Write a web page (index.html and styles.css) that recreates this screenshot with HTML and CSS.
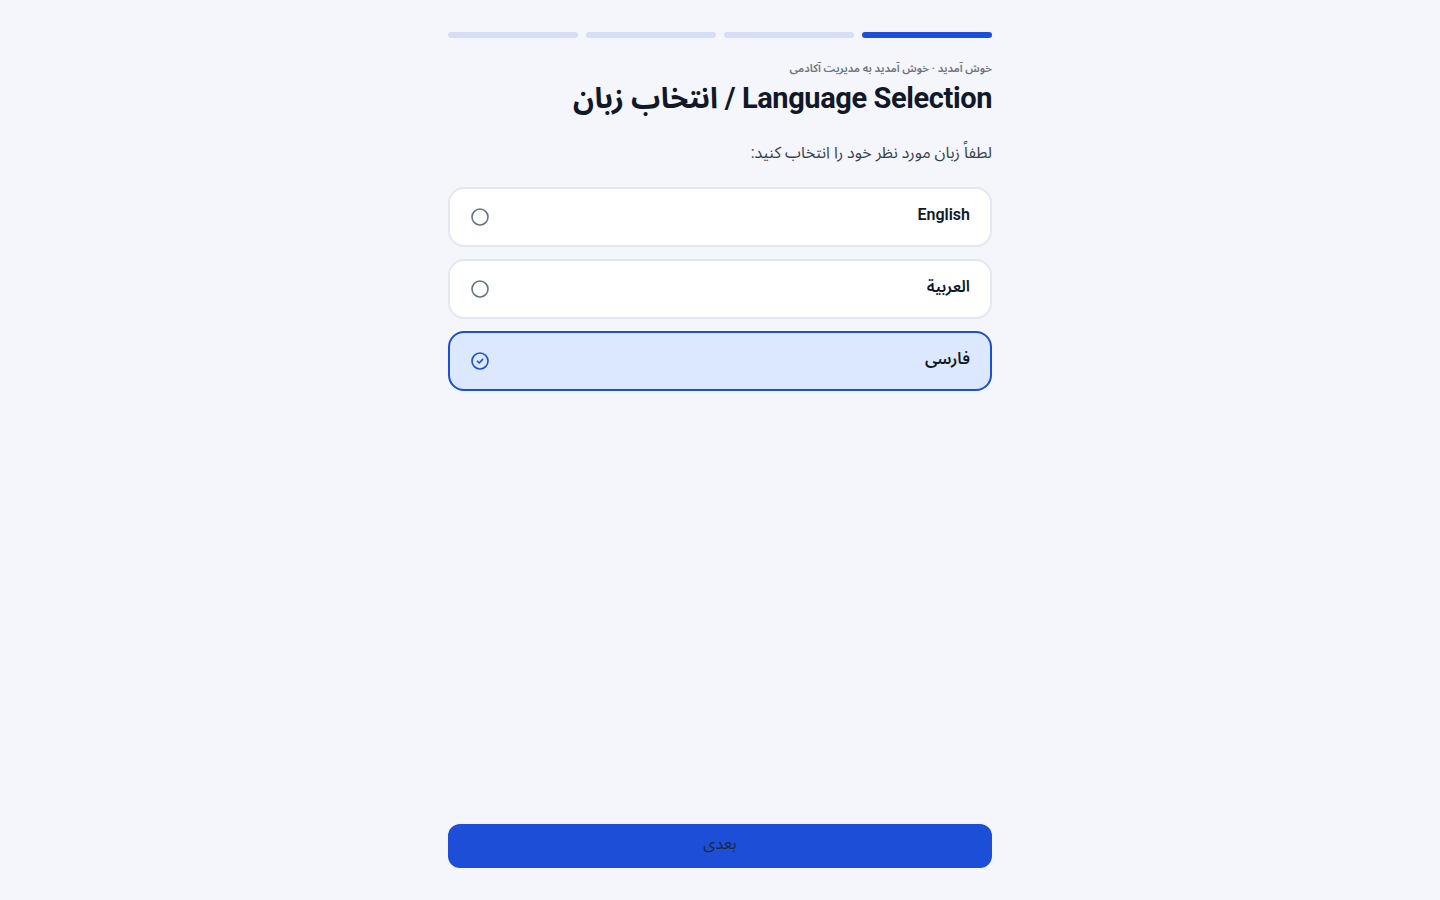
FILE: index.html
```html
<!DOCTYPE html>
<html lang="fa" dir="rtl">
<head>
<meta charset="utf-8">
<title>Language Selection</title>
<link rel="stylesheet" href="styles.css">
</head>
<body>
<main class="page">
  <div class="progress">
    <span class="seg active"></span>
    <span class="seg"></span>
    <span class="seg"></span>
    <span class="seg"></span>
  </div>
  <p class="eyebrow">خوش آمدید · خوش آمدید به مدیریت آکادمی</p>
  <h1 class="title">Language Selection / انتخاب زبان</h1>
  <p class="lead">لطفاً زبان مورد نظر خود را انتخاب کنید:</p>
  <div class="options">
    <label class="option">
      <span class="label" dir="ltr">English</span>
      <svg class="radio" viewBox="0 0 20 20" width="20" height="20"><circle cx="10" cy="10" r="8" fill="none" stroke="#64748b" stroke-width="1.6"/></svg>
    </label>
    <label class="option">
      <span class="label">العربية</span>
      <svg class="radio" viewBox="0 0 20 20" width="20" height="20"><circle cx="10" cy="10" r="8" fill="none" stroke="#64748b" stroke-width="1.6"/></svg>
    </label>
    <label class="option selected">
      <span class="label">فارسی</span>
      <svg class="radio" viewBox="0 0 20 20" width="20" height="20"><circle cx="10" cy="10" r="8" fill="none" stroke="#1d4ed8" stroke-width="1.6"/><path d="M7.4 10.2l1.8 1.8 3.4-3.6" fill="none" stroke="#1d4ed8" stroke-width="1.6" stroke-linecap="round" stroke-linejoin="round"/></svg>
    </label>
  </div>
  <button class="next" type="button">بعدی</button>
</main>
</body>
</html>
```
FILE: styles.css
```css
* { box-sizing: border-box; }
html, body { margin: 0; padding: 0; }
body {
  background: #f4f6fb;
  font-family: Roboto, "Noto Sans Arabic", "Noto Naskh Arabic", "DejaVu Sans", sans-serif;
  color: #111827;
}
.page {
  width: 544px;
  margin: 0 auto;
  min-height: 900px;
  padding: 32px 0 32px;
  display: flex;
  flex-direction: column;
}
.progress {
  display: flex;
  gap: 8px;
  height: 6px;
}
.seg {
  flex: 1;
  border-radius: 3px;
  background: #d5def5;
}
.seg.active { background: #1d4ed8; }
.eyebrow {
  margin: 23px 0 0;
  font-size: 11px;
  line-height: 16px;
  font-weight: 600;
  color: #6b7280;
}
.title {
  margin: 3px 0 0;
  font-size: 29px;
  line-height: 36px;
  font-weight: 700;
  color: #111827;
  letter-spacing: -0.4px;
}
.lead {
  margin: 25px 0 0;
  font-size: 16px;
  line-height: 24px;
  color: #374151;
}
.options {
  margin-top: 22px;
  display: flex;
  flex-direction: column;
  gap: 12px;
}
.option {
  height: 60px;
  border: 2px solid #e2e8f0;
  border-radius: 16px;
  background: #ffffff;
  padding: 0 20px;
  display: flex;
  align-items: center;
  justify-content: space-between;
}
.option.selected {
  border-color: #1d4ed8;
  background: #dbe8fe;
}
.label {
  font-size: 16px;
  line-height: 24px;
  font-weight: 600;
  color: #111827;
  margin-bottom: 5px;
}
.radio { display: block; }
.next {
  margin-top: auto;
  height: 44px;
  border: 0;
  border-radius: 12px;
  background: #1d4ed8;
  color: #1f2937;
  font-family: inherit;
  font-size: 16px;
  padding: 0 0 4px;
}
```
